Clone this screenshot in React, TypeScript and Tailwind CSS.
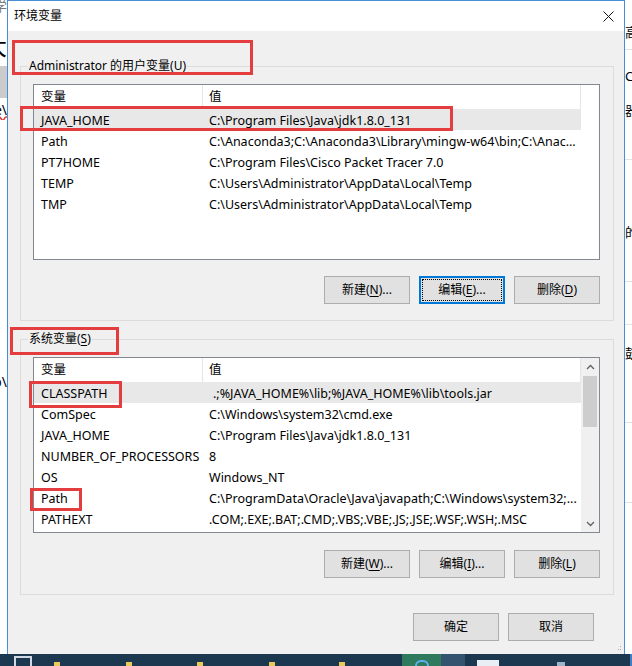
import React from "react";

type Row = { name: string; value: string; selected?: boolean; indent?: boolean };

const userRows: Row[] = [
  { name: "JAVA_HOME", value: "C:\\Program Files\\Java\\jdk1.8.0_131", selected: true },
  { name: "Path", value: "C:\\Anaconda3;C:\\Anaconda3\\Library\\mingw-w64\\bin;C:\\Anac..." },
  { name: "PT7HOME", value: "C:\\Program Files\\Cisco Packet Tracer 7.0" },
  { name: "TEMP", value: "C:\\Users\\Administrator\\AppData\\Local\\Temp" },
  { name: "TMP", value: "C:\\Users\\Administrator\\AppData\\Local\\Temp" },
];

const sysRows: Row[] = [
  { name: "CLASSPATH", value: ".;%JAVA_HOME%\\lib;%JAVA_HOME%\\lib\\tools.jar", selected: true, indent: true },
  { name: "ComSpec", value: "C:\\Windows\\system32\\cmd.exe" },
  { name: "JAVA_HOME", value: "C:\\Program Files\\Java\\jdk1.8.0_131" },
  { name: "NUMBER_OF_PROCESSORS", value: "8" },
  { name: "OS", value: "Windows_NT" },
  { name: "Path", value: "C:\\ProgramData\\Oracle\\Java\\javapath;C:\\Windows\\system32;..." },
  { name: "PATHEXT", value: ".COM;.EXE;.BAT;.CMD;.VBS;.VBE;.JS;.JSE;.WSF;.WSH;.MSC" },
];

function Mn({ c }: { c: string }) {
  return <span className="underline underline-offset-[2px] decoration-[1px]">{c}</span>;
}

function Btn({ children, focused }: { children: React.ReactNode; focused?: boolean }) {
  if (focused) {
    return (
      <div className="w-[86px] h-[28px] bg-[#e1e1e1] border-2 border-[#0078d7] p-[1px] flex">
        <div className="flex-1 border border-dotted border-black flex items-center justify-center text-[12px] text-black">
          {children}
        </div>
      </div>
    );
  }
  return (
    <div className="w-[86px] h-[28px] bg-[#e1e1e1] border border-[#adadad] flex items-center justify-center text-[12px] text-black">
      {children}
    </div>
  );
}

function Header({ withThird }: { withThird: boolean }) {
  return (
    <div className="h-[24px] flex text-[12.5px] text-black shrink-0">
      <div className="w-[169px] border-r border-[#e5e5e5] pl-[7px] flex items-center">变量</div>
      <div className="w-[378px] border-r border-[#e5e5e5] pl-[6px] flex items-center">值</div>
      {withThird && <div className="flex-1" />}
    </div>
  );
}

function DataRow({ r }: { r: Row }) {
  return (
    <div className={`h-[21px] w-[547px] flex items-center pt-[3px] text-[12.5px] text-black whitespace-nowrap ${r.selected ? "bg-[#e8e8e8]" : ""}`}>
      <div className="w-[169px] pl-[7px] overflow-hidden">{r.name}</div>
      <div className={`w-[378px] overflow-hidden ${r.indent ? "pl-[10px]" : "pl-[6px]"}`}>{r.value}</div>
    </div>
  );
}

function Chevron({ up }: { up: boolean }) {
  return (
    <svg width="9" height="6" viewBox="0 0 9 6">
      <path d={up ? "M1 5 L4.5 1.5 L8 5" : "M1 1 L4.5 4.5 L8 1"} fill="none" stroke="#606060" strokeWidth="1.3" />
    </svg>
  );
}

function Group({ label, children }: { label: React.ReactNode; children: React.ReactNode }) {
  return (
    <div className="relative w-[594px] border border-[#dcdcdc] pt-[17px] pl-[12px] pr-[13px] pb-[16px]">
      <span className="absolute -top-[9px] left-[7px] px-[1px] bg-[#f0f0f0] leading-[16px] text-[12px] text-black">
        {label}
      </span>
      {children}
    </div>
  );
}

export default function App() {
  return (
    <div className="relative w-[632px] h-[666px] overflow-hidden bg-white flex flex-col font-['Noto_Sans','Noto_Sans_CJK_SC',sans-serif]">
      <div className="flex h-[654px]">
        {/* left background strip */}
        <div className="w-[7px] h-full bg-white flex flex-col overflow-hidden">
          <div className="h-[14px] flex justify-end items-start overflow-hidden">
            <span className="text-[13px] leading-[12px] text-[#777] whitespace-nowrap">学</span>
          </div>
          <div className="h-[52px] flex justify-end items-center overflow-hidden">
            <span className="text-[24px] leading-[26px] text-black whitespace-nowrap pt-[12px]">大</span>
          </div>
          <div className="h-[32px] bg-[#cbcbcb]" />
          <div className="h-[22px] flex justify-end items-center overflow-hidden">
            <span className="text-[14px] text-black whitespace-nowrap underline decoration-wavy decoration-[#d33]">e\</span>
          </div>
          <div className="h-[250px]" />
          <div className="h-[22px] flex justify-end items-center overflow-hidden">
            <span className="text-[14px] text-black whitespace-nowrap">o\</span>
          </div>
        </div>

        {/* window */}
        <div className="w-[618px] h-full border-l border-r border-t border-[#4a8fd6] flex flex-col">
          <div className="h-[30px] bg-white flex items-center justify-between pl-[6px] pr-[10px] shrink-0">
            <span className="text-[12px] text-black">环境变量</span>
            <svg width="11" height="11" viewBox="0 0 11 11">
              <path d="M0.5 0.5 L10.5 10.5 M10.5 0.5 L0.5 10.5" stroke="#111" strokeWidth="1" />
            </svg>
          </div>
          <div className="flex-1 bg-[#f0f0f0] pl-[12px] pt-[35px] flex flex-col relative">
            <Group label={<>Administrator 的用户变量(<Mn c="U" />)</>}>
              <div className="w-[567px] h-[176px] border border-[#828790] bg-white flex flex-col">
                <Header withThird />
                {userRows.map((r) => (
                  <DataRow key={r.name} r={r} />
                ))}
              </div>
              <div className="flex justify-end gap-[9px] mt-[16px]">
                <Btn>新建(<Mn c="N" />)...</Btn>
                <Btn focused>编辑(<Mn c="E" />)...</Btn>
                <Btn>删除(<Mn c="D" />)</Btn>
              </div>
            </Group>
            <div className="h-[18px]" />
            <Group label={<>系统变量(<Mn c="S" />)</>}>
              <div className="w-[567px] h-[176px] border border-[#828790] bg-white flex">
                <div className="w-[547px] flex flex-col">
                  <Header withThird={false} />
                  {sysRows.map((r) => (
                    <DataRow key={r.name} r={r} />
                  ))}
                </div>
                <div className="w-[18px] bg-[#f0f0f0] flex flex-col items-center">
                  <div className="h-[17px] flex items-center justify-center">
                    <Chevron up />
                  </div>
                  <div className="w-[14px] h-[51px] bg-[#cdcdcd] mt-[1px]" />
                  <div className="flex-1" />
                  <div className="h-[17px] flex items-center justify-center">
                    <Chevron up={false} />
                  </div>
                </div>
              </div>
              <div className="flex justify-end gap-[9px] mt-[17px]">
                <Btn>新建(<Mn c="W" />)...</Btn>
                <Btn>编辑(<Mn c="I" />)...</Btn>
                <Btn>删除(<Mn c="L" />)</Btn>
              </div>
            </Group>
            <div className="flex justify-end gap-[9px] mt-[18px] pr-[30px]">
              <Btn>确定</Btn>
              <Btn>取消</Btn>
            </div>
            <div className="absolute right-[2px] bottom-[2px] w-[6px] h-[6px] grid grid-cols-3 gap-[0px]">
              <span />
              <span />
              <span className="w-[1px] h-[1px] bg-[#aaa]" />
              <span />
              <span className="w-[1px] h-[1px] bg-[#aaa]" />
              <span className="w-[1px] h-[1px] bg-[#aaa]" />
            </div>
          </div>
        </div>

        {/* right background strip */}
        <div className="w-[7px] h-full bg-white flex flex-col overflow-hidden text-[13px] text-black whitespace-nowrap">
          <div className="h-[22px]" />
          <div className="h-[20px] leading-[20px]">高</div>
          <div className="h-[8px] border-b border-[#e3e3e3]" />
          <div className="h-[16px]" />
          <div className="h-[20px] leading-[20px]">C.</div>
          <div className="h-[14px]" />
          <div className="h-[20px] leading-[20px]">器</div>
          <div className="h-[40px] border-b border-[#e3e3e3]" />
          <div className="h-[62px]" />
          <div className="h-[20px] leading-[20px]">的</div>
          <div className="h-[40px] border-b border-[#e3e3e3]" />
          <div className="h-[43px] border-b border-[#e3e3e3]" />
          <div className="h-[18px]" />
          <div className="h-[20px] leading-[20px]">鼓</div>
          <div className="h-[60px] border-b border-[#e3e3e3]" />
          <div className="h-[80px] border-b border-[#e3e3e3]" />
        </div>
      </div>

      {/* taskbar */}
      <div className="h-[12px] bg-[#1c3850] flex items-start relative">
        <div className="ml-[14px] mt-[2px] w-[18px] h-[10px] border-t-2 border-l-2 border-r-2 border-[#cfd8e3]" />
        <div className="ml-[22px] mt-[8px] w-[6px] h-[4px] bg-[#e8c95a]" />
        <div className="ml-[66px] mt-[8px] w-[6px] h-[4px] bg-[#e8c95a]" />
        <div className="ml-[65px] mt-[8px] w-[6px] h-[4px] bg-[#e8c95a]" />
        <div className="ml-[66px] mt-[8px] w-[6px] h-[4px] bg-[#e8c95a]" />
        <div className="ml-[64px] mt-[8px] w-[6px] h-[4px] bg-[#e8c95a]" />
        <div className="ml-[57px] w-[39px] h-[12px] bg-[#2f7a5c] flex justify-center items-end">
          <div className="w-[14px] h-[6px] rounded-t-full border-t-2 border-l-2 border-r-2 border-[#5ab3f0]" />
        </div>
        <div className="w-[24px] h-[12px] bg-[#34536e]" />
        <div className="ml-[12px] mt-[6px] w-[22px] h-[6px] bg-[#e8eef4]" />
        <div className="ml-[58px] mt-[8px] w-[8px] h-[4px] bg-[#9fb3c6]" />
        <div className="ml-auto w-[2px] h-[12px] bg-[#3b7fc4]" />
      </div>

      {/* red annotation boxes */}
      <div className="absolute left-[12px] top-[40px] w-[241px] h-[35px] border-[3px] border-[#e43d3f]" />
      <div className="absolute left-[20px] top-[106px] w-[433px] h-[25px] border-[3px] border-[#e43d3f]" />
      <div className="absolute left-[10px] top-[327px] w-[109px] h-[28px] border-[3px] border-[#e43d3f]" />
      <div className="absolute left-[29px] top-[381px] w-[93px] h-[27px] border-[3px] border-[#e43d3f]" />
      <div className="absolute left-[30px] top-[488px] w-[52px] h-[23px] border-[3px] border-[#e43d3f]" />
    </div>
  );
}
